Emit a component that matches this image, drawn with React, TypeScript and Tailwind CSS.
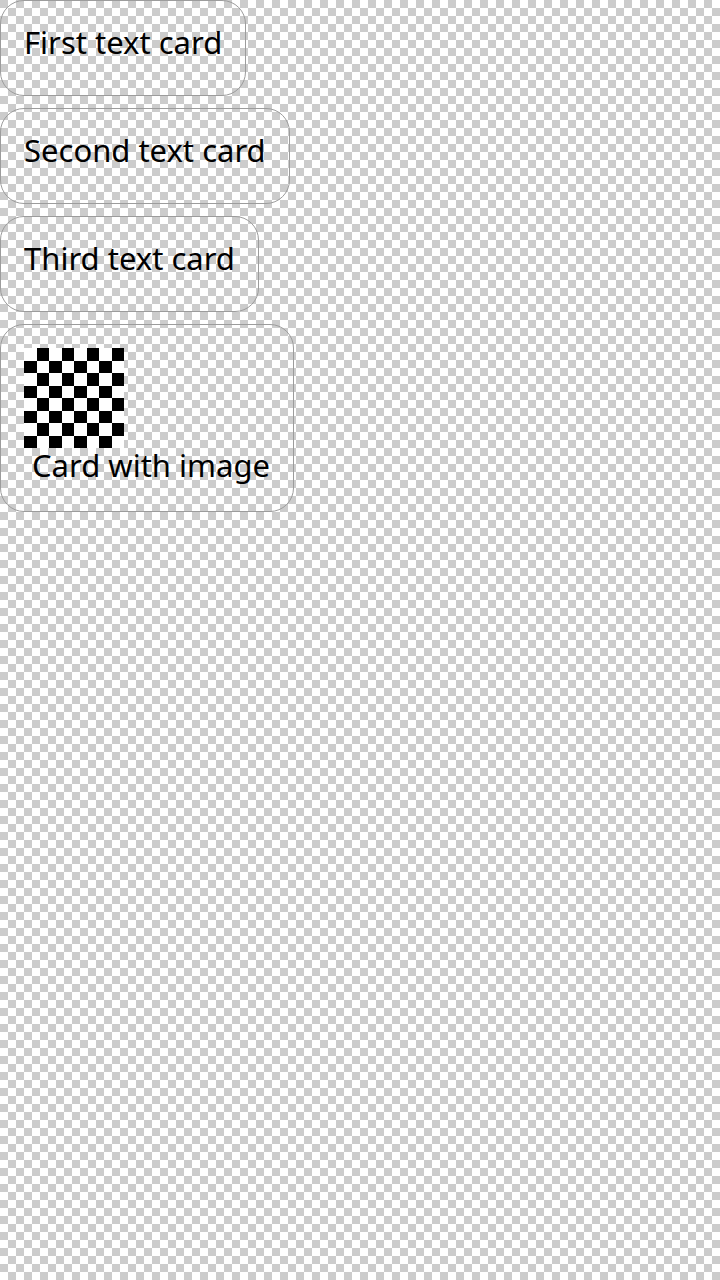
import React from "react";

function Checker() {
  const cells: React.ReactNode[] = [];
  for (let r = 0; r < 8; r++) {
    for (let c = 0; c < 8; c++) {
      if ((r + c) % 2 === 1) {
        cells.push(<rect key={`${r}-${c}`} x={c * 12.5} y={r * 12.5} width={12.5} height={12.5} fill="#000" />);
      }
    }
  }
  return (
    <svg width="100" height="100" viewBox="0 0 100 100" shapeRendering="crispEdges">
      <rect x="0" y="0" width="100" height="100" fill="#fff" />
      {cells}
    </svg>
  );
}

function TextCard({ label }: { label: string }) {
  return (
    <div className="h-24 rounded-[24px] border-[1.5px] border-[#9c9c9c] px-[23px] pt-[17px]">
      <div className="text-[31px] text-black leading-[48px] whitespace-nowrap">{label}</div>
    </div>
  );
}

export default function App() {
  const font = { fontFamily: '"Noto Sans", "DejaVu Sans", sans-serif' };
  return (
    <div
      className="min-h-screen w-[720px] bg-[repeating-conic-gradient(#fff_0%_25%,#cccccc_0%_50%)] bg-[length:16px_16px]"
      style={font}
    >
      <div className="flex flex-col items-start gap-3">
        <TextCard label="First text card" />
        <TextCard label="Second text card" />
        <TextCard label="Third text card" />
        <div className="rounded-[24px] border-[1.5px] border-[#9c9c9c] px-[23px] py-[23px] flex flex-col items-start">
          <Checker />
          <div className="h-10 pl-2 text-[31px] text-black leading-[34px] whitespace-nowrap">Card with image</div>
        </div>
      </div>
    </div>
  );
}
